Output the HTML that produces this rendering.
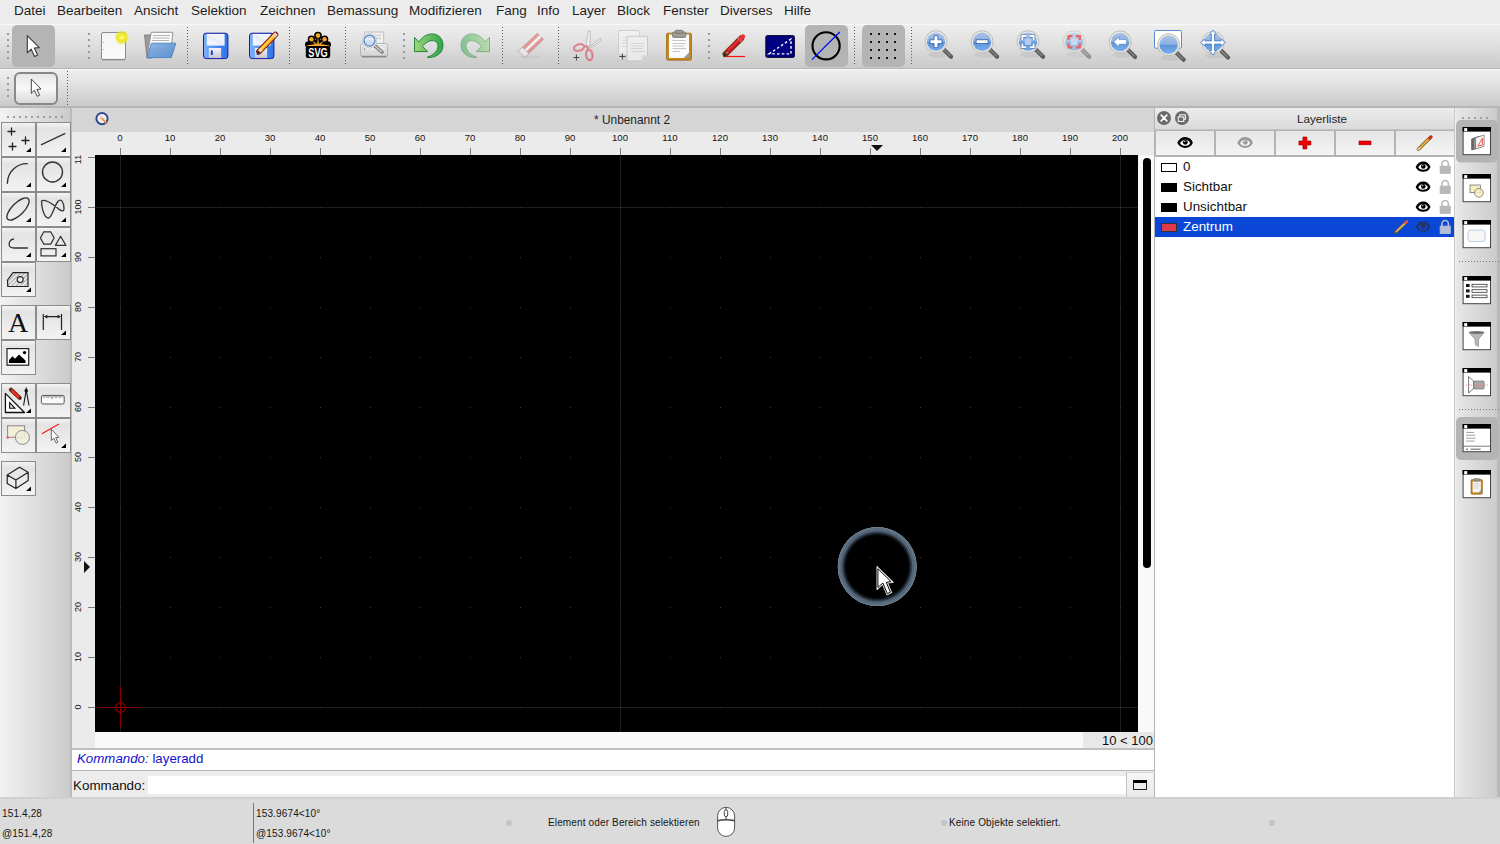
<!DOCTYPE html>
<html><head><meta charset="utf-8">
<style>
*{margin:0;padding:0;box-sizing:border-box}
html,body{width:1500px;height:844px;overflow:hidden;background:#dcdcdc;font-family:"Liberation Sans",sans-serif;position:relative}
.a{position:absolute}
svg{overflow:visible}
#menubar{left:0;top:0;width:1500px;height:24px;background:#ececec}
#menubar span{position:absolute;top:3px;font-size:13.5px;color:#1e1e1e;line-height:16px}
.tb{left:0;width:1500px;background:linear-gradient(#eeeeee,#e3e3e3 35%,#cacaca);border-top:1px solid #f8f8f8;border-bottom:1px solid #b6b6b6}
#tb1{top:24px;height:45px}
#tb2{top:69px;height:39px;border-bottom-width:2px !important}
#ldock{left:0;top:108px;width:72px;height:690px;background:linear-gradient(90deg,#f2f2f2,#dedede 50%,#cbcbcb 97%,#bababa 97%,#bababa)}
.tbtn{position:absolute;width:35px;height:35px;border:1px solid #8c8c8c;background:linear-gradient(#f3f3f3 0,#e3e3e3 18%,#f3f3f3 100%)}
.tbtn svg{position:absolute;left:0;top:0}
#mdi{left:72px;top:108px;width:1082px;height:690px;background:#ececec}
#mtitle{left:72px;top:108px;width:1082px;height:24px;background:#d5d5d5}
#mtitleT{left:594px;top:113px;font-size:11.9px;color:#1e1e1e;line-height:14px;white-space:nowrap}
#rulerT{left:72px;top:132px;width:1082px;height:23px;background:#ebebeb}
#rulerL{left:72px;top:155px;width:24px;height:593px;background:#ebebeb}
#rightstrip{left:1138px;top:155px;width:16px;height:593px;background:#f9f9f9}
#botstrip{left:95px;top:732px;width:1043px;height:16px;background:#f9f9f9}
#canvas{left:95px;top:155px;width:1043px;height:577px;background:#000;overflow:hidden}
#zoomlbl{left:1083px;top:732px;width:71px;height:16px;background:#e8e8e8;font-size:13px;color:#111;text-align:right;line-height:17px;padding-right:1px}
#hist{left:72px;top:748px;width:1082px;height:23px;background:#fff;border-top:2px solid #bfbfbf;border-bottom:1px solid #b4b4b4;font-size:13.3px;color:#1212cc;line-height:18px;padding-left:5px}
#cmdrow{left:72px;top:771px;width:1082px;height:27px;background:#ececec}
#cmdlbl{left:73px;top:778px;font-size:13.4px;color:#111;line-height:16px}
#cmdin{left:148px;top:776px;width:978px;height:18px;background:#fff}
#cmdbtn{left:1126px;top:772px;width:27px;height:26px;background:linear-gradient(#f6f6f6,#e8e8e8);border-left:1px solid #c4c4c4;border-top:1px solid #d4d4d4}
#status{left:0;top:797px;width:1500px;height:47px;background:#dbdbdb;border-top:2px solid #d0d0d0}
.st{position:absolute;font-size:10px;color:#161616;line-height:12px;white-space:nowrap;letter-spacing:.14px}
#rpanel{left:1154px;top:108px;width:301px;height:690px;background:#fff;border-left:1px solid #b4b4b4;border-right:1px solid #c8c8c8}
#rtitle{left:1155px;top:108px;width:299px;height:22px;background:linear-gradient(#ededed,#dadada);border-bottom:1px solid #c4c4c4}
#rtitleT{left:1297px;top:112px;font-size:11.7px;color:#1e1e1e;line-height:14px;white-space:nowrap}
#rbtns{left:1155px;top:130px;width:299px;height:27px;background:#b4b4b4}
.lbtn{position:absolute;top:1px;height:24px;background:linear-gradient(#e6e6e6,#f4f4f4)}
#rdock{left:1455px;top:108px;width:45px;height:689px;background:linear-gradient(90deg,#f0f0f0 0,#e6e6e6 5%,#cbcbcb 94%,#bababa 94%,#bababa)}
.row{position:absolute;left:1155px;width:299px;height:20px;font-size:13.4px;color:#111;line-height:20px}
.row .sw{position:absolute;left:6px;top:6px;width:16px;height:9px;background:#000}
.row .nm{position:absolute;left:28px;top:0}
.dsel{position:absolute;background:#b4b4b4;border-radius:6px}
</style></head><body>
<div id="menubar" class="a">
<span style="left:14px">Datei</span>
<span style="left:57px">Bearbeiten</span>
<span style="left:134px">Ansicht</span>
<span style="left:191px">Selektion</span>
<span style="left:260px">Zeichnen</span>
<span style="left:327px">Bemassung</span>
<span style="left:409px">Modifizieren</span>
<span style="left:496px">Fang</span>
<span style="left:537px">Info</span>
<span style="left:572px">Layer</span>
<span style="left:617px">Block</span>
<span style="left:663px">Fenster</span>
<span style="left:720px">Diverses</span>
<span style="left:784px">Hilfe</span>
</div>
<div id="tb1" class="a tb"></div>
<div id="tb2" class="a tb"></div>
<svg class="a" style="left:0;top:0" width="1500" height="107">
<defs>
 <linearGradient id="gDoc" x1="0" y1="0" x2="0" y2="1"><stop offset="0" stop-color="#f4f4f4"/><stop offset="1" stop-color="#fbfbfb"/></linearGradient>
 <radialGradient id="gGlow"><stop offset="0" stop-color="#ffffff"/><stop offset=".22" stop-color="#f8f040"/><stop offset=".6" stop-color="#eee42a"/><stop offset=".8" stop-color="#eee42a" stop-opacity=".6"/><stop offset="1" stop-color="#eee42a" stop-opacity="0"/></radialGradient>
 <linearGradient id="gFold" x1="0" y1="0" x2="1" y2="1"><stop offset="0" stop-color="#8fb6e2"/><stop offset="1" stop-color="#5b8fd0"/></linearGradient>
 <linearGradient id="gFlop" x1="0" y1="0" x2="1" y2="0"><stop offset="0" stop-color="#7fb2fb"/><stop offset=".5" stop-color="#4b8df2"/><stop offset="1" stop-color="#2f74e8"/></linearGradient>
 <linearGradient id="gShut" x1="0" y1="0" x2="0" y2="1"><stop offset="0" stop-color="#f2f2f6"/><stop offset="1" stop-color="#c6c6d4"/></linearGradient>
 <linearGradient id="gUndo" x1="0" y1="0" x2="1" y2="0"><stop offset="0" stop-color="#9ad878"/><stop offset="1" stop-color="#2fa64a"/></linearGradient>
 <linearGradient id="gLens" x1="0" y1="0" x2="0" y2="1"><stop offset="0" stop-color="#a9c3e6"/><stop offset=".48" stop-color="#8db0e0"/><stop offset=".52" stop-color="#5f93d8"/><stop offset="1" stop-color="#78aef0"/></linearGradient>
 <linearGradient id="gPrn" x1="0" y1="0" x2="0" y2="1"><stop offset="0" stop-color="#f4f4f4"/><stop offset="1" stop-color="#cfcfcf"/></linearGradient>
 <g id="lensHandle"><path d="M8,8 L15,15" stroke="#5c5c5c" stroke-width="4.2" stroke-linecap="round"/><path d="M8.5,8.5 L14,14" stroke="#8a8a8a" stroke-width="1.2" stroke-linecap="round"/></g>
 <g id="lens"><ellipse cx="3" cy="13" rx="11" ry="3" fill="#000" opacity=".06"/><use href="#lensHandle"/><circle r="11" fill="#e9e9e2" stroke="#bdbdb4" stroke-width="1"/><circle r="9.2" fill="url(#gLens)"/></g>
</defs>
<!-- handles / separators tb1 -->
<g fill="#9a9a9a">
 <rect x="7" y="33" width="2" height="2"/><rect x="7" y="39" width="2" height="2"/><rect x="7" y="45" width="2" height="2"/><rect x="7" y="51" width="2" height="2"/><rect x="7" y="57" width="2" height="2"/>
 <rect x="88" y="33" width="2" height="2"/><rect x="88" y="39" width="2" height="2"/><rect x="88" y="45" width="2" height="2"/><rect x="88" y="51" width="2" height="2"/><rect x="88" y="57" width="2" height="2"/>
 <rect x="403" y="33" width="2" height="2"/><rect x="403" y="39" width="2" height="2"/><rect x="403" y="45" width="2" height="2"/><rect x="403" y="51" width="2" height="2"/><rect x="403" y="57" width="2" height="2"/>
 <rect x="708" y="33" width="2" height="2"/><rect x="708" y="39" width="2" height="2"/><rect x="708" y="45" width="2" height="2"/><rect x="708" y="51" width="2" height="2"/><rect x="708" y="57" width="2" height="2"/>
 <rect x="7" y="77" width="2" height="2"/><rect x="7" y="83" width="2" height="2"/><rect x="7" y="89" width="2" height="2"/><rect x="7" y="95" width="2" height="2"/>
</g>
<g fill="#5a5a5a">
<rect x="187" y="27" width="1" height="1"/>
<rect x="187" y="30" width="1" height="1"/>
<rect x="187" y="33" width="1" height="1"/>
<rect x="187" y="36" width="1" height="1"/>
<rect x="187" y="39" width="1" height="1"/>
<rect x="187" y="42" width="1" height="1"/>
<rect x="187" y="45" width="1" height="1"/>
<rect x="187" y="48" width="1" height="1"/>
<rect x="187" y="51" width="1" height="1"/>
<rect x="187" y="54" width="1" height="1"/>
<rect x="187" y="57" width="1" height="1"/>
<rect x="187" y="60" width="1" height="1"/>
<rect x="187" y="63" width="1" height="1"/>
<rect x="289" y="27" width="1" height="1"/>
<rect x="289" y="30" width="1" height="1"/>
<rect x="289" y="33" width="1" height="1"/>
<rect x="289" y="36" width="1" height="1"/>
<rect x="289" y="39" width="1" height="1"/>
<rect x="289" y="42" width="1" height="1"/>
<rect x="289" y="45" width="1" height="1"/>
<rect x="289" y="48" width="1" height="1"/>
<rect x="289" y="51" width="1" height="1"/>
<rect x="289" y="54" width="1" height="1"/>
<rect x="289" y="57" width="1" height="1"/>
<rect x="289" y="60" width="1" height="1"/>
<rect x="289" y="63" width="1" height="1"/>
<rect x="345" y="27" width="1" height="1"/>
<rect x="345" y="30" width="1" height="1"/>
<rect x="345" y="33" width="1" height="1"/>
<rect x="345" y="36" width="1" height="1"/>
<rect x="345" y="39" width="1" height="1"/>
<rect x="345" y="42" width="1" height="1"/>
<rect x="345" y="45" width="1" height="1"/>
<rect x="345" y="48" width="1" height="1"/>
<rect x="345" y="51" width="1" height="1"/>
<rect x="345" y="54" width="1" height="1"/>
<rect x="345" y="57" width="1" height="1"/>
<rect x="345" y="60" width="1" height="1"/>
<rect x="345" y="63" width="1" height="1"/>
<rect x="502" y="27" width="1" height="1"/>
<rect x="502" y="30" width="1" height="1"/>
<rect x="502" y="33" width="1" height="1"/>
<rect x="502" y="36" width="1" height="1"/>
<rect x="502" y="39" width="1" height="1"/>
<rect x="502" y="42" width="1" height="1"/>
<rect x="502" y="45" width="1" height="1"/>
<rect x="502" y="48" width="1" height="1"/>
<rect x="502" y="51" width="1" height="1"/>
<rect x="502" y="54" width="1" height="1"/>
<rect x="502" y="57" width="1" height="1"/>
<rect x="502" y="60" width="1" height="1"/>
<rect x="502" y="63" width="1" height="1"/>
<rect x="558" y="27" width="1" height="1"/>
<rect x="558" y="30" width="1" height="1"/>
<rect x="558" y="33" width="1" height="1"/>
<rect x="558" y="36" width="1" height="1"/>
<rect x="558" y="39" width="1" height="1"/>
<rect x="558" y="42" width="1" height="1"/>
<rect x="558" y="45" width="1" height="1"/>
<rect x="558" y="48" width="1" height="1"/>
<rect x="558" y="51" width="1" height="1"/>
<rect x="558" y="54" width="1" height="1"/>
<rect x="558" y="57" width="1" height="1"/>
<rect x="558" y="60" width="1" height="1"/>
<rect x="558" y="63" width="1" height="1"/>
<rect x="854" y="27" width="1" height="1"/>
<rect x="854" y="30" width="1" height="1"/>
<rect x="854" y="33" width="1" height="1"/>
<rect x="854" y="36" width="1" height="1"/>
<rect x="854" y="39" width="1" height="1"/>
<rect x="854" y="42" width="1" height="1"/>
<rect x="854" y="45" width="1" height="1"/>
<rect x="854" y="48" width="1" height="1"/>
<rect x="854" y="51" width="1" height="1"/>
<rect x="854" y="54" width="1" height="1"/>
<rect x="854" y="57" width="1" height="1"/>
<rect x="854" y="60" width="1" height="1"/>
<rect x="854" y="63" width="1" height="1"/>
<rect x="911" y="27" width="1" height="1"/>
<rect x="911" y="30" width="1" height="1"/>
<rect x="911" y="33" width="1" height="1"/>
<rect x="911" y="36" width="1" height="1"/>
<rect x="911" y="39" width="1" height="1"/>
<rect x="911" y="42" width="1" height="1"/>
<rect x="911" y="45" width="1" height="1"/>
<rect x="911" y="48" width="1" height="1"/>
<rect x="911" y="51" width="1" height="1"/>
<rect x="911" y="54" width="1" height="1"/>
<rect x="911" y="57" width="1" height="1"/>
<rect x="911" y="60" width="1" height="1"/>
<rect x="911" y="63" width="1" height="1"/>
<rect x="67" y="71" width="1" height="1"/>
<rect x="67" y="74" width="1" height="1"/>
<rect x="67" y="77" width="1" height="1"/>
<rect x="67" y="80" width="1" height="1"/>
<rect x="67" y="83" width="1" height="1"/>
<rect x="67" y="86" width="1" height="1"/>
<rect x="67" y="89" width="1" height="1"/>
<rect x="67" y="92" width="1" height="1"/>
<rect x="67" y="95" width="1" height="1"/>
<rect x="67" y="98" width="1" height="1"/>
<rect x="67" y="101" width="1" height="1"/>
<rect x="67" y="104" width="1" height="1"/>
</g>
<!-- selected backgrounds -->
<rect x="12" y="25" width="43" height="42" rx="5" fill="#b4b4b4"/>
<rect x="805" y="25" width="43" height="42" rx="5" fill="#b4b4b4"/>
<rect x="862" y="25" width="43" height="42" rx="5" fill="#b4b4b4"/>
<!-- select arrow -->
<path d="M27.3,35.6 L27.3,52.8 L31.2,49.2 L34.6,56.4 L37.6,55 L34.3,48 L39.3,47.6 Z" fill="#fff" stroke="#3a3a3a" stroke-width="1.1" stroke-linejoin="round"/>
<!-- tb2 select button -->
<defs><linearGradient id="gB2" x1="0" y1="0" x2="0" y2="1"><stop offset="0" stop-color="#e6e6e6"/><stop offset=".5" stop-color="#f8f8f8"/><stop offset="1" stop-color="#d6d6d6"/></linearGradient></defs><rect x="15" y="73" width="42" height="31" rx="5" fill="url(#gB2)" stroke="#888" stroke-width="2"/>
<path d="M31.3,79 L31.3,93.4 L34.4,90.4 L37.2,96.3 L39.6,95.2 L36.9,89.4 L41,89 Z" fill="#fff" stroke="#444" stroke-width="1" stroke-linejoin="round"/>
<!-- new -->
<rect x="101.5" y="32.5" width="24" height="27" rx="1.5" fill="url(#gDoc)" stroke="#8c8c8c" stroke-width="1"/>
<line x1="102" y1="59.6" x2="125" y2="59.6" stroke="#888" stroke-width="1.4"/>
<circle cx="103.5" cy="42.5" r=".5" fill="#999"/><circle cx="103.5" cy="49.5" r=".5" fill="#999"/>
<circle cx="121.8" cy="37.5" r="7.4" fill="url(#gGlow)"/>
<!-- open -->
<path d="M144.5,35 L152,35 L152,58 L147,58 Z" fill="#9a9a9a" stroke="#777" stroke-width=".8"/>
<path d="M151.3,32.3 L172.8,32.3 L171,50 L147.5,54 Z" fill="#fbfbfb" stroke="#8a8a8a" stroke-width=".9"/>
<path d="M153,35.5 L170,35.5 M152.5,38 L169.5,38 M152,40.5 L169,40.5" stroke="#b4b4b4" stroke-width="1.2"/>
<path d="M151.5,43.2 L175.8,43.2 L171.3,57.6 L146.8,57.6 Z" fill="url(#gFold)" stroke="#4d7fc4" stroke-width=".9" stroke-linejoin="round"/>
<!-- save -->
<g id="floppy">
<rect x="203.5" y="33.2" width="24.4" height="25.4" rx="2.6" fill="url(#gFlop)" stroke="#1b1fa0" stroke-width="1"/>
<rect x="206.8" y="34" width="17.8" height="11.6" fill="#f2f4fc"/>
<path d="M208,36 L223,44" stroke="#e0e6f8" stroke-width="3" opacity=".6"/>
<rect x="208.8" y="48" width="12.3" height="10" fill="url(#gShut)"/>
<rect x="210.8" y="50.4" width="2" height="4.6" fill="#1b3fd8"/>
</g>
<use href="#floppy" x="46"/>
<path d="M259,51.5 L275.5,34.5" stroke="#8a1a10" stroke-width="5.6" stroke-linecap="round"/>
<path d="M259.8,50.7 L275.5,34.5" stroke="#f8b010" stroke-width="3.8" stroke-linecap="butt"/>
<path d="M261,49 L274.5,35.2" stroke="#ffe070" stroke-width="1.2"/>
<path d="M273.5,36.5 L276.5,33.5" stroke="#e8d0c0" stroke-width="3.8"/>
<path d="M258.8,51.7 L261.5,49" stroke="#f0e0c0" stroke-width="3"/>
<circle cx="258.6" cy="51.9" r="1" fill="#222"/>
<!-- svg logo -->
<g fill="#000">
 <circle cx="318" cy="35.6" r="3.9"/><circle cx="311.4" cy="39.2" r="3.7"/><circle cx="324.6" cy="39.2" r="3.7"/><circle cx="308.4" cy="44.6" r="3.4"/><circle cx="327.6" cy="44.6" r="3.4"/>
 <path d="M306,46 L318,38 L330,46 Z"/>
</g>
<g fill="#f9a825">
 <circle cx="318" cy="35.6" r="2.3"/><circle cx="311.4" cy="39.2" r="2.2"/><circle cx="324.6" cy="39.2" r="2.2"/>
 <path d="M318,37 L317,44.5 L319,44.5 Z M311.8,40.5 L315.6,45 L317,44 Z M324.2,40.5 L320.4,45 L319,44 Z"/>
 <path d="M306.6,45.6 Q318,42.6 329.4,45.6 L329.4,46.4 L306.6,46.4 Z"/>
</g>
<rect x="305.8" y="46" width="24.4" height="12" rx="2.6" fill="#000"/>
<text x="318" y="56.8" font-family="Liberation Sans" font-weight="bold" font-size="12" fill="#fff" text-anchor="middle" textLength="19.4" lengthAdjust="spacingAndGlyphs">SVG</text>
<!-- print preview -->
<rect x="364.5" y="32" width="19.2" height="13" rx="1.2" fill="#f0f0f0" stroke="#bdbdbd" stroke-width="1"/>
<path d="M375,35.5 L381,35.5 M375,38.5 L381,38.5" stroke="#cfcfcf" stroke-width="1.4"/>
<rect x="360.5" y="43.5" width="27.2" height="13.2" rx="2.8" fill="url(#gPrn)" stroke="#b0b0b0" stroke-width="1"/>
<rect x="362.5" y="45.5" width="23" height="5.6" rx="1.5" fill="#e6e6e6" stroke="#cfcfcf" stroke-width=".6"/>
<line x1="362" y1="56.6" x2="386.5" y2="56.6" stroke="#8a8a8a" stroke-width="1.6"/>
<circle cx="364.6" cy="49.2" r=".6" fill="#555"/>
<path d="M374.6,45.6 L382,52" stroke="#7a7a7a" stroke-width="3.6" stroke-linecap="round"/>
<path d="M375,46 L381.6,51.6" stroke="#c8c8c8" stroke-width="1.6" stroke-linecap="round"/>
<circle cx="369.5" cy="40.7" r="7.2" fill="#f6f6f6" stroke="#c4c4c4" stroke-width=".8"/>
<circle cx="369.5" cy="40.7" r="5.5" fill="#cddbee" stroke="#4f84cf" stroke-width="1.3"/>
<path d="M365,40 Q369.5,37.8 374,40" stroke="#e8eef8" stroke-width="2" fill="none"/>
<!-- undo -->
<path id="undo" d="M414.5,37.4 L414.5,51.6 L427.8,51.6 L422.4,46.3 C425,43 429,40.6 432.2,40.6 C436,40.6 438,43 438,46 C438,51 433,55.5 427.2,57.3 C434,58.5 443,54 443,45.5 C443,38 438,33.9 432.2,33.9 C426,33.9 421.5,38 418.9,42.1 Z" fill="url(#gUndo)" stroke="#1a7a34" stroke-width=".9" stroke-linejoin="round"/>
<g opacity=".5"><use href="#undo" transform="translate(904,0) scale(-1,1)"/></g>
<!-- eraser -->
<g opacity=".6">
<ellipse cx="530" cy="57" rx="11" ry="1.6" fill="#bdbdbd" opacity=".7"/>
<path d="M518.2,51.3 L537.2,33.3 L543.6,39.3 L525.2,57 Z" fill="#e26a6a" stroke="#a05050" stroke-width=".6"/>
<path d="M521.5,54.4 L540.4,36.3" stroke="#ffffff" stroke-width="2.6"/>
<path d="M518.2,51.3 L522.3,47.4 L528.8,53.5 L525.2,57 Z" fill="#f2f2f2" stroke="#a0a0a0" stroke-width=".6"/>
</g>
<!-- cut -->
<g opacity=".62">
<path d="M586,46 L588.2,31 L590.3,31 L589.8,46.3 Z" fill="#fafafa" stroke="#888" stroke-width=".7"/>
<path d="M589.5,46.8 L600.5,38.2 L601,40.3 L590.5,48 Z" fill="#fafafa" stroke="#888" stroke-width=".7"/>
<ellipse cx="579" cy="47.5" rx="5.2" ry="3.2" transform="rotate(-18 579 47.5)" fill="none" stroke="#e0505a" stroke-width="2.2"/>
<ellipse cx="589.3" cy="55" rx="3.2" ry="5.2" transform="rotate(-8 589.3 55)" fill="none" stroke="#e0505a" stroke-width="2.2"/>
<path d="M583.5,46.5 L587,46.5 L588.5,50" stroke="#e0505a" stroke-width="2" fill="none"/>
</g>
<path d="M573.4,57.5 L579.4,57.5 M576.4,54.5 L576.4,60.5" stroke="#444" stroke-width="1"/>
<!-- copy -->
<g opacity=".7">
<rect x="618.5" y="30.5" width="21" height="24.5" rx="1.5" fill="#f4f4f4" stroke="#c6c6c6"/>
<path d="M622,37.5 L630,37.5 M622,40.5 L630,40.5 M622,43.5 L630,43.5 M622,46.5 L630,46.5" stroke="#d8d8d8" stroke-width="1.1"/>
<path d="M627,36.3 L647.5,36.3 L647.5,55.3 L641.5,61 L627,61 Z" fill="#f3f3f3" stroke="#bcbcbc"/>
<path d="M641.5,61 L641.5,55.3 L647.5,55.3 Z" fill="#dadada"/>
<path d="M631,43.5 L644.5,43.5 M631,46 L644,46 M631,48.5 L643,48.5 M631,51.5 L644.5,51.5" stroke="#d0d0d0" stroke-width="1.1"/>
</g>
<path d="M619.4,56.5 L625.4,56.5 M622.4,53.5 L622.4,59.5" stroke="#444" stroke-width="1"/>
<!-- paste -->
<rect x="666.5" y="33.2" width="25" height="27" rx="1.5" fill="#c8861e" stroke="#9a6a1a" stroke-width=".8"/>
<path d="M669,34.5 L689,34.5 L689,58 L669,58 Z" fill="#fbfbfb"/>
<path d="M683.5,58 L689,52.5 L689,58 Z" fill="#9b9b9b"/>
<path d="M672.5,40.5 L686,40.5 M672.5,43.5 L685.5,43.5 M672.5,46 L684.5,46 M672.5,48.5 L686,48.5 M672.5,51.5 L680,51.5" stroke="#c6c6c6" stroke-width="1"/>
<rect x="672.4" y="32" width="13.4" height="5.4" rx="1.5" fill="#9e9e94" stroke="#6e6e66" stroke-width=".8"/>
<rect x="675.3" y="30.3" width="7.6" height="3" rx=".8" fill="#9e9e94" stroke="#6e6e66" stroke-width=".8"/>
<!-- pencil (draw) -->
<line x1="723" y1="56.5" x2="745" y2="56.5" stroke="#ff1010" stroke-width="1.2"/>
<path d="M725.5,54 L741.2,38.3" stroke="#6a3a10" stroke-width="6" stroke-linecap="round"/>
<path d="M726.5,53 L741.2,38.3" stroke="#d0142a" stroke-width="4.4"/>
<path d="M728.5,50 L739,39.5" stroke="#ff6040" stroke-width="1"/>
<path d="M739.2,40.3 L741.2,38.3" stroke="#d8d8d8" stroke-width="4.4"/>
<path d="M740.6,38.9 L743,36.5" stroke="#f03040" stroke-width="4.4" stroke-linecap="round"/>
<path d="M724.5,55.1 L727.8,51.2 L728.9,52.3 Z" fill="#f0d8b0" stroke="#6a3a10" stroke-width=".7"/>
<circle cx="724.9" cy="54.7" r=".9" fill="#111"/>
<!-- blue rect -->
<rect x="765.8" y="35.6" width="28.6" height="21.8" rx="1.5" fill="#000082" stroke="#0a0a30" stroke-width="1"/>
<path d="M769.1,53.9 L791,39 L791,53.9 Z" fill="none" stroke="#fff" stroke-width="1.4" stroke-dasharray="2.6 2.2"/>
<!-- circle icon -->
<circle cx="826.1" cy="45.8" r="13.6" fill="none" stroke="#000" stroke-width="2.1"/>
<line x1="812" y1="59.6" x2="839.8" y2="32" stroke="#0010ff" stroke-width="1.3"/>
<!-- grid dots -->
<g fill="#111">
 <rect x="870" y="33" width="2" height="2"/><rect x="878" y="33" width="2" height="2"/><rect x="886" y="33" width="2" height="2"/><rect x="894" y="33" width="2" height="2"/>
 <rect x="870" y="41" width="2" height="2"/><rect x="878" y="41" width="2" height="2"/><rect x="886" y="41" width="2" height="2"/><rect x="894" y="41" width="2" height="2"/>
 <rect x="870" y="49" width="2" height="2"/><rect x="878" y="49" width="2" height="2"/><rect x="886" y="49" width="2" height="2"/><rect x="894" y="49" width="2" height="2"/>
 <rect x="870" y="57" width="2" height="2"/><rect x="878" y="57" width="2" height="2"/><rect x="886" y="57" width="2" height="2"/><rect x="894" y="57" width="2" height="2"/>
</g>
<!-- zoom in -->
<g transform="translate(936 41.7)"><use href="#lens"/>
 <path d="M-1.9,-6 h3.8 v4.1 h4.1 v3.8 h-4.1 v4.1 h-3.8 v-4.1 h-4.1 v-3.8 h4.1 Z" fill="#fff" stroke="#2a5aa8" stroke-width=".8"/></g>
<!-- zoom out -->
<g transform="translate(982.1 41.7)"><use href="#lens"/>
 <rect x="-6" y="-1.9" width="12" height="3.8" fill="#fff" stroke="#2a5aa8" stroke-width=".8"/></g>
<!-- zoom auto -->
<g transform="translate(1028 41.7)"><use href="#lens"/>
 <rect x="-3.2" y="-3.2" width="6.4" height="6.4" fill="#b4cdee"/>
 <path d="M-5.6,-1.8 v-3.8 h3.8 M1.8,-5.6 h3.8 v3.8 M5.6,1.8 v3.8 h-3.8 M-1.8,5.6 h-3.8 v-3.8" fill="none" stroke="#3a68b0" stroke-width="3.2"/>
 <path d="M-5.6,-1.8 v-3.8 h3.8 M1.8,-5.6 h3.8 v3.8 M5.6,1.8 v3.8 h-3.8 M-1.8,5.6 h-3.8 v-3.8" fill="none" stroke="#fff" stroke-width="2"/></g>
<!-- zoom selection (disabled) -->
<g transform="translate(1074.2 41.7)" opacity=".55"><use href="#lens"/></g>
<g transform="translate(1074.2 41.7)">
 <rect x="-3.2" y="-3.2" width="6.4" height="6.4" fill="#c8d8f0"/>
 <path d="M-5.6,-1.8 v-3.8 h3.8 M1.8,-5.6 h3.8 v3.8 M5.6,1.8 v3.8 h-3.8 M-1.8,5.6 h-3.8 v-3.8" fill="none" stroke="#ea6464" stroke-width="2.2"/></g>
<!-- zoom previous -->
<g transform="translate(1120.1 41.9)"><use href="#lens"/>
 <path d="M-6.5,0 L-1,-5 L-1,-2.3 L6.5,-2.3 L6.5,2.3 L-1,2.3 L-1,5 Z" fill="#fff" stroke="#4a78c0" stroke-width=".6"/></g>
<!-- zoom window -->
<rect x="1154.5" y="30.5" width="27" height="17.6" rx="1" fill="#fff" stroke="#5b8ad0" stroke-width="1"/>
<g transform="translate(1168.6 44.7)"><use href="#lens"/></g>
<!-- pan -->
<g transform="translate(1213 42.5)"><use href="#lens"/>
 <path d="M0,-12.5 L3.5,-8 L1.6,-8 L1.6,-1.6 L8,-1.6 L8,-3.5 L12.5,0 L8,3.5 L8,1.6 L1.6,1.6 L1.6,8 L3.5,8 L0,12.5 L-3.5,8 L-1.6,8 L-1.6,1.6 L-8,1.6 L-8,3.5 L-12.5,0 L-8,-3.5 L-8,-1.6 L-1.6,-1.6 L-1.6,-8 L-3.5,-8 Z" fill="#fff" stroke="#4a7ec8" stroke-width=".9" stroke-linejoin="round"/></g>
</svg>

<div id="ldock" class="a"></div>
<div class="tbtn" style="left:1px;top:122px"></div>
<div class="tbtn" style="left:36px;top:122px"></div>
<div class="tbtn" style="left:1px;top:157px"></div>
<div class="tbtn" style="left:36px;top:157px"></div>
<div class="tbtn" style="left:1px;top:192px"></div>
<div class="tbtn" style="left:36px;top:192px"></div>
<div class="tbtn" style="left:1px;top:227px"></div>
<div class="tbtn" style="left:36px;top:227px"></div>
<div class="tbtn" style="left:1px;top:262px"></div>
<div class="tbtn" style="left:1px;top:305px"></div>
<div class="tbtn" style="left:36px;top:305px"></div>
<div class="tbtn" style="left:1px;top:340px"></div>
<div class="tbtn" style="left:1px;top:383px"></div>
<div class="tbtn" style="left:36px;top:383px"></div>
<div class="tbtn" style="left:1px;top:418px"></div>
<div class="tbtn" style="left:36px;top:418px"></div>
<div class="tbtn" style="left:1px;top:461px"></div>
<svg class="a" style="left:0;top:0" width="72" height="500">
<g fill="#9c9c9c">
 <rect x="7" y="116" width="2" height="2"/><rect x="13" y="116" width="2" height="2"/><rect x="19" y="116" width="2" height="2"/><rect x="25" y="116" width="2" height="2"/><rect x="31" y="116" width="2" height="2"/><rect x="37" y="116" width="2" height="2"/><rect x="43" y="116" width="2" height="2"/><rect x="49" y="116" width="2" height="2"/><rect x="55" y="116" width="2" height="2"/><rect x="61" y="116" width="2" height="2"/>
</g>
<!-- small triangles -->
<g fill="#000">
 <path d="M26,152 L31,147.5 L31,152 Z"/><path d="M61,152 L66,147.5 L66,152 Z"/>
 <path d="M26,187 L31,182.5 L31,187 Z"/><path d="M61,187 L66,182.5 L66,187 Z"/>
 <path d="M26,222 L31,217.5 L31,222 Z"/><path d="M61,222 L66,217.5 L66,222 Z"/>
 <path d="M26,257 L31,252.5 L31,257 Z"/><path d="M61,257 L66,252.5 L66,257 Z"/>
 <path d="M26,292 L31,287.5 L31,292 Z"/>
 <path d="M61,335 L66,330.5 L66,335 Z"/>
 <path d="M26,413 L31,408.5 L31,413 Z"/>
 <path d="M61,448 L66,443.5 L66,448 Z"/>
 <path d="M26,491 L31,486.5 L31,491 Z"/>
</g>
<g stroke="#222" stroke-width="1.3" fill="none" stroke-linecap="round">
 <!-- points -->
 <path d="M8,131.5 h7 M11.5,128 v7 M22,140.5 h7 M25.5,137 v7 M9,146.5 h7 M12.5,143 v7"/>
 <!-- line -->
 <path d="M41.5,144.7 L64.8,133.6" stroke="#333"/>
 <!-- arc -->
 <path d="M7.4,183.2 A19.8,19.8 0 0 1 27.3,163.6" stroke="#333" stroke-width="1.4"/>
 <!-- circle -->
 <circle cx="52.5" cy="172" r="10" stroke="#333" stroke-width="1.4"/>
 <!-- ellipse -->
 <ellipse cx="18" cy="209" rx="14.5" ry="6" transform="rotate(-45 18 209)" stroke="#333" stroke-width="1.4"/>
 <!-- spline -->
 <path d="M41.5,201 C42,212 45.5,218.5 48.5,218 C52,217.5 54,206 58,201.5 C61.5,197.5 64,203 64,209 C64,212 60.5,211 57.5,208 C52.5,204 45,198.5 41.5,201 Z" stroke="#333" stroke-width="1.3"/>
 <!-- polyline -->
 <path d="M13.5,239 C9.5,239.5 8.5,243.5 9.5,246 C10.5,248 13,248 15,248 L27.5,248" stroke="#333" stroke-width="1.3"/>
 <!-- shapes -->
 <path d="M43.8,231.8 L50.7,231.8 L54.1,238 L50.7,244.1 L43.8,244.1 L40.4,238 Z" stroke="#333" stroke-width="1.2"/>
 <path d="M60.6,236.3 L65.9,245.4 L55.4,245.4 Z" stroke="#333" stroke-width="1.2" stroke-linejoin="round"/>
 <rect x="41" y="248.7" width="15" height="7.2" stroke="#333" stroke-width="1.2"/>
</g>
<!-- hatch -->
<defs><pattern id="hp" width="3" height="3" patternUnits="userSpaceOnUse" patternTransform="rotate(45)"><line x1="0" y1="0" x2="0" y2="3" stroke="#444" stroke-width=".8"/></pattern></defs>
<path d="M7.5,280 L13,272.6 L28,272.6 L28,286.5 L7.8,286.5 Z" fill="url(#hp)" stroke="#222" stroke-width="1.2"/>
<circle cx="20.2" cy="279.6" r="3" fill="#f0f0f0" stroke="#222" stroke-width="1.1"/>
<!-- text A -->
<text x="18" y="331.6" font-family="Liberation Serif" font-size="28" fill="#111" text-anchor="middle">A</text>
<!-- dimension -->
<g stroke="#222" stroke-width="1.2" fill="none">
 <path d="M43.3,314 L43.3,330 M61.5,314 L61.5,330 M45,316.6 L60,316.6"/>
</g>
<path d="M43.8,316.6 L47.3,314.8 L47.3,318.4 Z M61,316.6 L57.5,314.8 L57.5,318.4 Z" fill="#222"/>
<!-- image -->
<rect x="7" y="348.6" width="21.7" height="16.6" fill="#fff" stroke="#222" stroke-width="1.2"/>
<path d="M9,363 L9,360 L12.5,356.3 L15,358.8 L19,354.5 L25.5,360.5 L25.5,363 Z" fill="#000"/>
<circle cx="24.5" cy="352.6" r="1.7" fill="#000"/>
<!-- snap / set square -->
<path d="M5.4,393.4 L5.4,412.5 L24.5,412.5 Z" fill="#fff" stroke="#111" stroke-width="1.3" stroke-linejoin="round"/>
<path d="M9.6,402.6 L9.6,408.3 L15,408.3 Z" fill="#ddd" stroke="#111" stroke-width="1.1"/>
<path d="M11,389.8 L19.6,397.8" stroke="#6a2a10" stroke-width="4.2" stroke-linecap="round"/>
<path d="M11.5,390.2 L19.5,397.6" stroke="#e0302a" stroke-width="2.8"/>
<path d="M19.2,397.3 L21,399" stroke="#222" stroke-width="1.2"/>
<g stroke="#111" stroke-width="1.1" fill="none">
 <path d="M26.2,387.5 L26.2,390 M26.2,390 L23.6,405.5 M26.2,390 L29,405.5"/>
 <circle cx="26.2" cy="390.8" r="1.2" fill="#111"/>
</g>
<!-- measure ruler -->
<rect x="41.4" y="395.4" width="22.8" height="8.6" rx="1.6" fill="#fafafa" stroke="#555" stroke-width="1"/>
<path d="M44,395.8 v2.4 M46,395.8 v1.6 M48,395.8 v2.4 M50,395.8 v1.6 M52,395.8 v3.2 M54,395.8 v1.6 M56,395.8 v2.4 M58,395.8 v1.6 M60,395.8 v2.4 M62,395.8 v1.6" stroke="#555" stroke-width=".8"/>
<!-- modify -->
<rect x="7.6" y="425.8" width="17" height="11.5" fill="#f2eed8" stroke="#8a8a8a" stroke-width="1"/>
<circle cx="22.4" cy="437.4" r="7" fill="#f2eed8" fill-opacity=".85" stroke="#8a8a8a" stroke-width="1"/>
<circle cx="7.6" cy="437.4" r="1.2" fill="#ee5050"/>
<!-- select -->
<line x1="41.9" y1="433.8" x2="59" y2="424" stroke="#ee2020" stroke-width="1.3"/>
<path d="M51.3,429.3 L51.3,440.5 L53.8,438.2 L56,443 L57.8,442.2 L55.7,437.6 L58.8,437.3 Z" fill="#fff" stroke="#555" stroke-width=".9" stroke-linejoin="round"/>
<!-- 3D box -->
<g stroke="#222" stroke-width="1.2" fill="none" stroke-linejoin="round">
 <path d="M7.2,474.9 L19.5,467.3 L28.2,472.3 L15.9,480 Z M7.2,474.9 L7.2,483.5 L15.9,488.6 L28.2,480.6 L28.2,472.3 M15.9,480 L15.9,488.6"/>
</g>
</svg>

<div id="mdi" class="a"></div>
<div id="mtitle" class="a"></div>
<div id="mtitleT" class="a">* Unbenannt 2</div>
<div id="rulerT" class="a"></div>
<div id="rulerL" class="a"></div>
<div id="rightstrip" class="a"></div>
<div id="botstrip" class="a"></div>
<div id="canvas" class="a"></div>
<svg class="a" style="left:95px;top:155px" width="1043" height="577">
<g stroke="#1e1e1e" stroke-width="1">
<line x1="25.5" y1="0" x2="25.5" y2="577"/>
<line x1="525.5" y1="0" x2="525.5" y2="577"/>
<line x1="1025.5" y1="0" x2="1025.5" y2="577"/>
<line x1="0" y1="552.5" x2="1043" y2="552.5"/>
<line x1="0" y1="52.5" x2="1043" y2="52.5"/>
</g>
<g fill="#3a3a3a">
<rect x="25" y="552" width="1" height="1"/>
<rect x="25" y="502" width="1" height="1"/>
<rect x="25" y="452" width="1" height="1"/>
<rect x="25" y="402" width="1" height="1"/>
<rect x="25" y="352" width="1" height="1"/>
<rect x="25" y="302" width="1" height="1"/>
<rect x="25" y="252" width="1" height="1"/>
<rect x="25" y="202" width="1" height="1"/>
<rect x="25" y="152" width="1" height="1"/>
<rect x="25" y="102" width="1" height="1"/>
<rect x="25" y="52" width="1" height="1"/>
<rect x="25" y="2" width="1" height="1"/>
<rect x="75" y="552" width="1" height="1"/>
<rect x="75" y="502" width="1" height="1"/>
<rect x="75" y="452" width="1" height="1"/>
<rect x="75" y="402" width="1" height="1"/>
<rect x="75" y="352" width="1" height="1"/>
<rect x="75" y="302" width="1" height="1"/>
<rect x="75" y="252" width="1" height="1"/>
<rect x="75" y="202" width="1" height="1"/>
<rect x="75" y="152" width="1" height="1"/>
<rect x="75" y="102" width="1" height="1"/>
<rect x="75" y="52" width="1" height="1"/>
<rect x="75" y="2" width="1" height="1"/>
<rect x="125" y="552" width="1" height="1"/>
<rect x="125" y="502" width="1" height="1"/>
<rect x="125" y="452" width="1" height="1"/>
<rect x="125" y="402" width="1" height="1"/>
<rect x="125" y="352" width="1" height="1"/>
<rect x="125" y="302" width="1" height="1"/>
<rect x="125" y="252" width="1" height="1"/>
<rect x="125" y="202" width="1" height="1"/>
<rect x="125" y="152" width="1" height="1"/>
<rect x="125" y="102" width="1" height="1"/>
<rect x="125" y="52" width="1" height="1"/>
<rect x="125" y="2" width="1" height="1"/>
<rect x="175" y="552" width="1" height="1"/>
<rect x="175" y="502" width="1" height="1"/>
<rect x="175" y="452" width="1" height="1"/>
<rect x="175" y="402" width="1" height="1"/>
<rect x="175" y="352" width="1" height="1"/>
<rect x="175" y="302" width="1" height="1"/>
<rect x="175" y="252" width="1" height="1"/>
<rect x="175" y="202" width="1" height="1"/>
<rect x="175" y="152" width="1" height="1"/>
<rect x="175" y="102" width="1" height="1"/>
<rect x="175" y="52" width="1" height="1"/>
<rect x="175" y="2" width="1" height="1"/>
<rect x="225" y="552" width="1" height="1"/>
<rect x="225" y="502" width="1" height="1"/>
<rect x="225" y="452" width="1" height="1"/>
<rect x="225" y="402" width="1" height="1"/>
<rect x="225" y="352" width="1" height="1"/>
<rect x="225" y="302" width="1" height="1"/>
<rect x="225" y="252" width="1" height="1"/>
<rect x="225" y="202" width="1" height="1"/>
<rect x="225" y="152" width="1" height="1"/>
<rect x="225" y="102" width="1" height="1"/>
<rect x="225" y="52" width="1" height="1"/>
<rect x="225" y="2" width="1" height="1"/>
<rect x="275" y="552" width="1" height="1"/>
<rect x="275" y="502" width="1" height="1"/>
<rect x="275" y="452" width="1" height="1"/>
<rect x="275" y="402" width="1" height="1"/>
<rect x="275" y="352" width="1" height="1"/>
<rect x="275" y="302" width="1" height="1"/>
<rect x="275" y="252" width="1" height="1"/>
<rect x="275" y="202" width="1" height="1"/>
<rect x="275" y="152" width="1" height="1"/>
<rect x="275" y="102" width="1" height="1"/>
<rect x="275" y="52" width="1" height="1"/>
<rect x="275" y="2" width="1" height="1"/>
<rect x="325" y="552" width="1" height="1"/>
<rect x="325" y="502" width="1" height="1"/>
<rect x="325" y="452" width="1" height="1"/>
<rect x="325" y="402" width="1" height="1"/>
<rect x="325" y="352" width="1" height="1"/>
<rect x="325" y="302" width="1" height="1"/>
<rect x="325" y="252" width="1" height="1"/>
<rect x="325" y="202" width="1" height="1"/>
<rect x="325" y="152" width="1" height="1"/>
<rect x="325" y="102" width="1" height="1"/>
<rect x="325" y="52" width="1" height="1"/>
<rect x="325" y="2" width="1" height="1"/>
<rect x="375" y="552" width="1" height="1"/>
<rect x="375" y="502" width="1" height="1"/>
<rect x="375" y="452" width="1" height="1"/>
<rect x="375" y="402" width="1" height="1"/>
<rect x="375" y="352" width="1" height="1"/>
<rect x="375" y="302" width="1" height="1"/>
<rect x="375" y="252" width="1" height="1"/>
<rect x="375" y="202" width="1" height="1"/>
<rect x="375" y="152" width="1" height="1"/>
<rect x="375" y="102" width="1" height="1"/>
<rect x="375" y="52" width="1" height="1"/>
<rect x="375" y="2" width="1" height="1"/>
<rect x="425" y="552" width="1" height="1"/>
<rect x="425" y="502" width="1" height="1"/>
<rect x="425" y="452" width="1" height="1"/>
<rect x="425" y="402" width="1" height="1"/>
<rect x="425" y="352" width="1" height="1"/>
<rect x="425" y="302" width="1" height="1"/>
<rect x="425" y="252" width="1" height="1"/>
<rect x="425" y="202" width="1" height="1"/>
<rect x="425" y="152" width="1" height="1"/>
<rect x="425" y="102" width="1" height="1"/>
<rect x="425" y="52" width="1" height="1"/>
<rect x="425" y="2" width="1" height="1"/>
<rect x="475" y="552" width="1" height="1"/>
<rect x="475" y="502" width="1" height="1"/>
<rect x="475" y="452" width="1" height="1"/>
<rect x="475" y="402" width="1" height="1"/>
<rect x="475" y="352" width="1" height="1"/>
<rect x="475" y="302" width="1" height="1"/>
<rect x="475" y="252" width="1" height="1"/>
<rect x="475" y="202" width="1" height="1"/>
<rect x="475" y="152" width="1" height="1"/>
<rect x="475" y="102" width="1" height="1"/>
<rect x="475" y="52" width="1" height="1"/>
<rect x="475" y="2" width="1" height="1"/>
<rect x="525" y="552" width="1" height="1"/>
<rect x="525" y="502" width="1" height="1"/>
<rect x="525" y="452" width="1" height="1"/>
<rect x="525" y="402" width="1" height="1"/>
<rect x="525" y="352" width="1" height="1"/>
<rect x="525" y="302" width="1" height="1"/>
<rect x="525" y="252" width="1" height="1"/>
<rect x="525" y="202" width="1" height="1"/>
<rect x="525" y="152" width="1" height="1"/>
<rect x="525" y="102" width="1" height="1"/>
<rect x="525" y="52" width="1" height="1"/>
<rect x="525" y="2" width="1" height="1"/>
<rect x="575" y="552" width="1" height="1"/>
<rect x="575" y="502" width="1" height="1"/>
<rect x="575" y="452" width="1" height="1"/>
<rect x="575" y="402" width="1" height="1"/>
<rect x="575" y="352" width="1" height="1"/>
<rect x="575" y="302" width="1" height="1"/>
<rect x="575" y="252" width="1" height="1"/>
<rect x="575" y="202" width="1" height="1"/>
<rect x="575" y="152" width="1" height="1"/>
<rect x="575" y="102" width="1" height="1"/>
<rect x="575" y="52" width="1" height="1"/>
<rect x="575" y="2" width="1" height="1"/>
<rect x="625" y="552" width="1" height="1"/>
<rect x="625" y="502" width="1" height="1"/>
<rect x="625" y="452" width="1" height="1"/>
<rect x="625" y="402" width="1" height="1"/>
<rect x="625" y="352" width="1" height="1"/>
<rect x="625" y="302" width="1" height="1"/>
<rect x="625" y="252" width="1" height="1"/>
<rect x="625" y="202" width="1" height="1"/>
<rect x="625" y="152" width="1" height="1"/>
<rect x="625" y="102" width="1" height="1"/>
<rect x="625" y="52" width="1" height="1"/>
<rect x="625" y="2" width="1" height="1"/>
<rect x="675" y="552" width="1" height="1"/>
<rect x="675" y="502" width="1" height="1"/>
<rect x="675" y="452" width="1" height="1"/>
<rect x="675" y="402" width="1" height="1"/>
<rect x="675" y="352" width="1" height="1"/>
<rect x="675" y="302" width="1" height="1"/>
<rect x="675" y="252" width="1" height="1"/>
<rect x="675" y="202" width="1" height="1"/>
<rect x="675" y="152" width="1" height="1"/>
<rect x="675" y="102" width="1" height="1"/>
<rect x="675" y="52" width="1" height="1"/>
<rect x="675" y="2" width="1" height="1"/>
<rect x="725" y="552" width="1" height="1"/>
<rect x="725" y="502" width="1" height="1"/>
<rect x="725" y="452" width="1" height="1"/>
<rect x="725" y="402" width="1" height="1"/>
<rect x="725" y="352" width="1" height="1"/>
<rect x="725" y="302" width="1" height="1"/>
<rect x="725" y="252" width="1" height="1"/>
<rect x="725" y="202" width="1" height="1"/>
<rect x="725" y="152" width="1" height="1"/>
<rect x="725" y="102" width="1" height="1"/>
<rect x="725" y="52" width="1" height="1"/>
<rect x="725" y="2" width="1" height="1"/>
<rect x="775" y="552" width="1" height="1"/>
<rect x="775" y="502" width="1" height="1"/>
<rect x="775" y="452" width="1" height="1"/>
<rect x="775" y="402" width="1" height="1"/>
<rect x="775" y="352" width="1" height="1"/>
<rect x="775" y="302" width="1" height="1"/>
<rect x="775" y="252" width="1" height="1"/>
<rect x="775" y="202" width="1" height="1"/>
<rect x="775" y="152" width="1" height="1"/>
<rect x="775" y="102" width="1" height="1"/>
<rect x="775" y="52" width="1" height="1"/>
<rect x="775" y="2" width="1" height="1"/>
<rect x="825" y="552" width="1" height="1"/>
<rect x="825" y="502" width="1" height="1"/>
<rect x="825" y="452" width="1" height="1"/>
<rect x="825" y="402" width="1" height="1"/>
<rect x="825" y="352" width="1" height="1"/>
<rect x="825" y="302" width="1" height="1"/>
<rect x="825" y="252" width="1" height="1"/>
<rect x="825" y="202" width="1" height="1"/>
<rect x="825" y="152" width="1" height="1"/>
<rect x="825" y="102" width="1" height="1"/>
<rect x="825" y="52" width="1" height="1"/>
<rect x="825" y="2" width="1" height="1"/>
<rect x="875" y="552" width="1" height="1"/>
<rect x="875" y="502" width="1" height="1"/>
<rect x="875" y="452" width="1" height="1"/>
<rect x="875" y="402" width="1" height="1"/>
<rect x="875" y="352" width="1" height="1"/>
<rect x="875" y="302" width="1" height="1"/>
<rect x="875" y="252" width="1" height="1"/>
<rect x="875" y="202" width="1" height="1"/>
<rect x="875" y="152" width="1" height="1"/>
<rect x="875" y="102" width="1" height="1"/>
<rect x="875" y="52" width="1" height="1"/>
<rect x="875" y="2" width="1" height="1"/>
<rect x="925" y="552" width="1" height="1"/>
<rect x="925" y="502" width="1" height="1"/>
<rect x="925" y="452" width="1" height="1"/>
<rect x="925" y="402" width="1" height="1"/>
<rect x="925" y="352" width="1" height="1"/>
<rect x="925" y="302" width="1" height="1"/>
<rect x="925" y="252" width="1" height="1"/>
<rect x="925" y="202" width="1" height="1"/>
<rect x="925" y="152" width="1" height="1"/>
<rect x="925" y="102" width="1" height="1"/>
<rect x="925" y="52" width="1" height="1"/>
<rect x="925" y="2" width="1" height="1"/>
<rect x="975" y="552" width="1" height="1"/>
<rect x="975" y="502" width="1" height="1"/>
<rect x="975" y="452" width="1" height="1"/>
<rect x="975" y="402" width="1" height="1"/>
<rect x="975" y="352" width="1" height="1"/>
<rect x="975" y="302" width="1" height="1"/>
<rect x="975" y="252" width="1" height="1"/>
<rect x="975" y="202" width="1" height="1"/>
<rect x="975" y="152" width="1" height="1"/>
<rect x="975" y="102" width="1" height="1"/>
<rect x="975" y="52" width="1" height="1"/>
<rect x="975" y="2" width="1" height="1"/>
<rect x="1025" y="552" width="1" height="1"/>
<rect x="1025" y="502" width="1" height="1"/>
<rect x="1025" y="452" width="1" height="1"/>
<rect x="1025" y="402" width="1" height="1"/>
<rect x="1025" y="352" width="1" height="1"/>
<rect x="1025" y="302" width="1" height="1"/>
<rect x="1025" y="252" width="1" height="1"/>
<rect x="1025" y="202" width="1" height="1"/>
<rect x="1025" y="152" width="1" height="1"/>
<rect x="1025" y="102" width="1" height="1"/>
<rect x="1025" y="52" width="1" height="1"/>
<rect x="1025" y="2" width="1" height="1"/>
</g>
<g stroke="#8a0000" stroke-width="1.2" fill="none"><line x1="5" y1="552.5" x2="45" y2="552.5"/><line x1="25.5" y1="532" x2="25.5" y2="572"/><circle cx="25.5" cy="552.5" r="4.8"/></g>

</svg>
<svg class="a" style="left:0;top:0" width="1500" height="844">
<g stroke="#7a7a7a" stroke-width="1">
<line x1="120.5" y1="148" x2="120.5" y2="155"/>
<line x1="170.5" y1="148" x2="170.5" y2="155"/>
<line x1="220.5" y1="148" x2="220.5" y2="155"/>
<line x1="270.5" y1="148" x2="270.5" y2="155"/>
<line x1="320.5" y1="148" x2="320.5" y2="155"/>
<line x1="370.5" y1="148" x2="370.5" y2="155"/>
<line x1="420.5" y1="148" x2="420.5" y2="155"/>
<line x1="470.5" y1="148" x2="470.5" y2="155"/>
<line x1="520.5" y1="148" x2="520.5" y2="155"/>
<line x1="570.5" y1="148" x2="570.5" y2="155"/>
<line x1="620.5" y1="148" x2="620.5" y2="155"/>
<line x1="670.5" y1="148" x2="670.5" y2="155"/>
<line x1="720.5" y1="148" x2="720.5" y2="155"/>
<line x1="770.5" y1="148" x2="770.5" y2="155"/>
<line x1="820.5" y1="148" x2="820.5" y2="155"/>
<line x1="870.5" y1="148" x2="870.5" y2="155"/>
<line x1="920.5" y1="148" x2="920.5" y2="155"/>
<line x1="970.5" y1="148" x2="970.5" y2="155"/>
<line x1="1020.5" y1="148" x2="1020.5" y2="155"/>
<line x1="1070.5" y1="148" x2="1070.5" y2="155"/>
<line x1="1120.5" y1="148" x2="1120.5" y2="155"/>
<line x1="88" y1="707.5" x2="95" y2="707.5"/>
<line x1="88" y1="657.5" x2="95" y2="657.5"/>
<line x1="88" y1="607.5" x2="95" y2="607.5"/>
<line x1="88" y1="557.5" x2="95" y2="557.5"/>
<line x1="88" y1="507.5" x2="95" y2="507.5"/>
<line x1="88" y1="457.5" x2="95" y2="457.5"/>
<line x1="88" y1="407.5" x2="95" y2="407.5"/>
<line x1="88" y1="357.5" x2="95" y2="357.5"/>
<line x1="88" y1="307.5" x2="95" y2="307.5"/>
<line x1="88" y1="257.5" x2="95" y2="257.5"/>
<line x1="88" y1="207.5" x2="95" y2="207.5"/>
<line x1="88" y1="157.5" x2="95" y2="157.5"/>
</g>
<defs><clipPath id="clipL"><rect x="71" y="155" width="24" height="593"/></clipPath></defs>
<g font-family="Liberation Sans" font-size="9.6" fill="#151515" text-anchor="middle">
<text x="120" y="141.2">0</text>
<text x="170" y="141.2">10</text>
<text x="220" y="141.2">20</text>
<text x="270" y="141.2">30</text>
<text x="320" y="141.2">40</text>
<text x="370" y="141.2">50</text>
<text x="420" y="141.2">60</text>
<text x="470" y="141.2">70</text>
<text x="520" y="141.2">80</text>
<text x="570" y="141.2">90</text>
<text x="620" y="141.2">100</text>
<text x="670" y="141.2">110</text>
<text x="720" y="141.2">120</text>
<text x="770" y="141.2">130</text>
<text x="820" y="141.2">140</text>
<text x="870" y="141.2">150</text>
<text x="920" y="141.2">160</text>
<text x="970" y="141.2">170</text>
<text x="1020" y="141.2">180</text>
<text x="1070" y="141.2">190</text>
<text x="1120" y="141.2">200</text>
<g clip-path="url(#clipL)" font-size="9">
<text transform="translate(81.4 707) rotate(-90)">0</text>
<text transform="translate(81.4 657) rotate(-90)">10</text>
<text transform="translate(81.4 607) rotate(-90)">20</text>
<text transform="translate(81.4 557) rotate(-90)">30</text>
<text transform="translate(81.4 507) rotate(-90)">40</text>
<text transform="translate(81.4 457) rotate(-90)">50</text>
<text transform="translate(81.4 407) rotate(-90)">60</text>
<text transform="translate(81.4 357) rotate(-90)">70</text>
<text transform="translate(81.4 307) rotate(-90)">80</text>
<text transform="translate(81.4 257) rotate(-90)">90</text>
<text transform="translate(81.4 207) rotate(-90)">100</text>
<text transform="translate(81.4 157) rotate(-90)">110</text>
</g></g>
<path d="M871,145 L883,145 L877,151 Z" fill="#111"/>
<path d="M84,561 L84,573 L90,567 Z" fill="#111"/>
</svg>
<div id="zoomlbl" class="a">10 &lt; 100</div>
<div id="hist" class="a"><i>Kommando:</i> layeradd</div>
<div id="cmdrow" class="a"></div>
<div id="cmdlbl" class="a">Kommando:</div>
<div id="cmdin" class="a"></div>
<div id="cmdbtn" class="a"></div>
<svg class="a" style="left:0;top:0" width="1500" height="844" pointer-events="none">
<defs>
 <radialGradient id="gRing" cx="877.2" cy="566.6" r="40" gradientUnits="userSpaceOnUse">
  <stop offset="0" stop-color="#000" stop-opacity="0"/>
  <stop offset=".76" stop-color="#000" stop-opacity="0"/>
  <stop offset=".82" stop-color="#182028"/>
  <stop offset=".86" stop-color="#34414e"/>
  <stop offset=".89" stop-color="#56687a"/>
  <stop offset=".915" stop-color="#4e5e6e"/>
  <stop offset=".94" stop-color="#64788a"/>
  <stop offset=".96" stop-color="#56697a"/>
  <stop offset=".978" stop-color="#6e8294"/>
  <stop offset=".99" stop-color="#5a6c7c"/>
  <stop offset="1" stop-color="#000" stop-opacity="0"/>
 </radialGradient>
</defs>
<rect x="1143" y="158" width="8" height="410" rx="4" fill="#000"/>
<circle cx="877.2" cy="566.6" r="40" fill="url(#gRing)"/>
<path d="M876.9,566.2 L876.9,589.9 L882.6,584.7 L886.9,595.1 L891.8,592.7 L887.8,583.2 L893.5,582.3 Z" fill="#fff" stroke="#fff" stroke-width=".6" stroke-linejoin="round"/>
<path d="M877.9,568.7 L877.9,587.5 L882.9,583 L887.3,593.7 L890.4,592.2 L886.3,582.4 L891,581.6 Z" fill="#fff" stroke="#000" stroke-width="1" stroke-linejoin="round"/>
<!-- title icon -->
<circle cx="102" cy="118.6" r="5.6" fill="#f4f4f4" stroke="#31488f" stroke-width="2"/>
<path d="M99.5,116 L103.5,120 M102,115.5 L102,121 M99,118.6 L105,118.6" stroke="#d08080" stroke-width=".5"/>
<path d="M102.6,119.2 L106,122.6" stroke="#e8a020" stroke-width="1.8" stroke-linecap="round"/>
<circle cx="106.4" cy="123" r="1" fill="#e06060"/>
<!-- cmd button icon -->
<rect x="1133.5" y="780.5" width="13" height="9" fill="#eee" stroke="#222" stroke-width="1"/>
<rect x="1133" y="780" width="14" height="3" fill="#000"/>
</svg>

<div id="rpanel" class="a"></div>
<div id="rtitle" class="a"></div>
<div id="rtitleT" class="a">Layerliste</div>
<div id="rbtns" class="a">
<div class="lbtn" style="left:1px;width:58px"></div>
<div class="lbtn" style="left:61px;width:58px"></div>
<div class="lbtn" style="left:121px;width:58px"></div>
<div class="lbtn" style="left:181px;width:58px"></div>
<div class="lbtn" style="left:241px;width:58px"></div>
</div>
<div class="row" style="top:157px"><div class="sw" style="background:#fff;border:1px solid #000"></div><span class="nm">0</span></div>
<div class="row" style="top:177px"><div class="sw"></div><span class="nm">Sichtbar</span></div>
<div class="row" style="top:197px"><div class="sw"></div><span class="nm">Unsichtbar</span></div>
<div class="row" style="top:217px;background:#0b47d6;color:#fff"><div class="sw" style="background:#e03a4a;border:1px solid #333"></div><span class="nm">Zentrum</span></div>
<svg class="a" style="left:0;top:0" width="1500" height="260">
<defs>
 <g id="eye"><path d="M-7.4,0.3 C-5.6,-3.4 -3,-5.2 0.2,-5.2 C3.8,-5.2 6.2,-3.2 7.5,0.3 C6.2,3.6 3.6,5.2 0.2,5.2 C-3.2,5.2 -5.8,3.6 -7.4,0.3 Z" fill="#000"/><path d="M-4.7,0.7 C-3.7,-1.4 -1.9,-2.7 0.3,-2.7 C2.5,-2.7 4.1,-1.4 4.9,0.7 C3.9,2.5 2.3,3.2 0.2,3.2 C-1.9,3.2 -3.7,2.5 -4.7,0.7 Z" fill="#fff"/><circle cx=".3" cy="-.2" r="2.3" fill="#000"/><circle cx="-.2" cy="-1" r=".6" fill="#fff"/></g>
 <g id="lock"><path d="M-3.2,0 L-3.2,-2.5 A3.2,3.4 0 0 1 3.2,-2.5 L3.2,0" fill="none" stroke-width="1.6"/><rect x="-5" y="-0.2" width="10" height="7.2"/></g>
</defs>
<!-- close / float -->
<circle cx="1164" cy="118" r="7" fill="#6a6a6a"/>
<path d="M1161.2,115.2 L1166.8,120.8 M1166.8,115.2 L1161.2,120.8" stroke="#fff" stroke-width="1.7" stroke-linecap="round"/>
<circle cx="1182" cy="118" r="7" fill="#6a6a6a"/>
<rect x="1179.8" y="114.8" width="5.6" height="4.4" fill="none" stroke="#fff" stroke-width="1"/>
<rect x="1178.2" y="117" width="5.6" height="4.4" fill="#6a6a6a" stroke="#fff" stroke-width="1"/>
<!-- buttons icons -->
<use href="#eye" transform="translate(1185 142.5) scale(1.05)"/>
<g opacity=".35"><use href="#eye" transform="translate(1245 142.5) scale(1.05)"/></g>
<path d="M1302.9,137 h4 v4 h4 v4 h-4 v4 h-4 v-4 h-4 v-4 h4 Z" fill="#ee0000" stroke="#900" stroke-width=".6"/>
<rect x="1359" y="141" width="12" height="3.8" fill="#ee0000" stroke="#900" stroke-width=".6"/>
<path d="M1418.3,149.3 L1430.8,137" stroke="#7a5a20" stroke-width="3.4" stroke-linecap="round"/>
<path d="M1419,148.6 L1430.5,137.3" stroke="#e8b040" stroke-width="2"/>
<path d="M1429.4,138.6 L1431.2,136.8" stroke="#e02020" stroke-width="2.6" stroke-linecap="round"/>
<path d="M1417.5,150 L1419.8,147.8" stroke="#e8d0a0" stroke-width="1.8"/>
<!-- rows -->
<use href="#eye" transform="translate(1423 166.6)"/>
<use href="#eye" transform="translate(1423 186.6)"/>
<use href="#eye" transform="translate(1423 206.6)"/>
<g transform="translate(1423 226.6)"><path d="M-7.2,0.2 C-5.5,-3.2 -3,-5 0.2,-5 C3.8,-5 6,-3 7.3,0.3 C6,3.4 3.6,5 0.2,5 C-3.2,5 -5.6,3.4 -7.2,0.2 Z" fill="#25335e"/><path d="M-5,0.6 C-3.8,-1.8 -2,-3.2 0.3,-3.2 C2.6,-3.2 4.3,-1.8 5.1,0.6 C4,2.6 2.4,3.5 0.2,3.5 C-2.1,3.5 -3.9,2.6 -5,0.6 Z" fill="#0b47d6"/><path d="M-2.5,-2.8 C-2.7,-0.4 -1.6,1.6 0.3,1.8 C2.1,1.7 2.9,-0.2 2.8,-2.8 Z" fill="#25335e"/></g>
<g fill="#b8b8b8" stroke="#b8b8b8"><use href="#lock" transform="translate(1445.2 166.4)"/><use href="#lock" transform="translate(1445.2 186.4)"/><use href="#lock" transform="translate(1445.2 206.4)"/></g>
<g fill="#b4bed6" stroke="#b4bed6"><use href="#lock" transform="translate(1445.2 226.4)"/></g>
<path d="M1395.5,232.3 L1406.5,221.8" stroke="#6a5a30" stroke-width="3" stroke-linecap="round"/>
<path d="M1396,231.8 L1406.3,222" stroke="#d8b060" stroke-width="1.8"/>
<path d="M1405.2,223 L1407,221.3" stroke="#e05050" stroke-width="2.4" stroke-linecap="round"/>
</svg>

<div id="rdock" class="a"></div>
<svg class="a" style="left:1455px;top:107px" width="45" height="400">
<defs>
 <g id="win"><rect x=".5" y=".5" width="27.4" height="27.2" fill="#fff" stroke="#444" stroke-width="1"/><rect x="0" y="0" width="28.4" height="4.6" fill="#000"/><rect x="1.6" y="1.1" width="3" height="3" fill="#fff"/></g>
</defs>
<g fill="#a0a0a0">
 <rect x="7" y="10" width="2" height="2"/><rect x="13" y="10" width="2" height="2"/><rect x="19" y="10" width="2" height="2"/><rect x="25" y="10" width="2" height="2"/><rect x="31" y="10" width="2" height="2"/>
</g>
<g stroke="#777" stroke-width="1" stroke-dasharray="1 2">
 <line x1="4" y1="154.5" x2="45" y2="154.5"/>
 <line x1="4" y1="302.5" x2="45" y2="302.5"/>
</g>
<rect x="1" y="13" width="42" height="42.5" rx="5" fill="#b4b4b4"/>
<rect x="1" y="310" width="42" height="43" rx="5" fill="#b4b4b4"/>
<!-- icon 1 : layers -->
<g transform="translate(7.6 20)"><use href="#win"/>
 <path d="M9,12 L16,9.6 L16,20.5 L9,23 Z" fill="#6a6a6a" stroke="#444" stroke-width=".6"/>
 <path d="M11,11.4 L18,9 L18,20 L11,22.4 Z" fill="#9a9a9a" stroke="#555" stroke-width=".6"/>
 <path d="M13,10.8 L21.5,8 L21.5,19.4 L13,22 Z" fill="#f6f6f6" stroke="#666" stroke-width=".7"/>
 <path d="M15.2,19.2 L19.8,11.2 L19.8,18 Z" fill="none" stroke="#ee3030" stroke-width=".8"/>
</g>
<!-- icon 2 : block -->
<g transform="translate(7.6 67)"><use href="#win"/>
 <rect x="7.4" y="11" width="10.6" height="7.6" fill="#f6ecc0" stroke="#777" stroke-width=".8"/>
 <circle cx="16.3" cy="18.8" r="4.4" fill="#f6ecc0" fill-opacity=".85" stroke="#777" stroke-width=".8"/>
</g>
<!-- icon 3 : rounded rect -->
<g transform="translate(7.6 113)"><use href="#win"/>
 <rect x="5.5" y="10" width="17" height="11.5" rx="2.5" fill="#f6f6f4" stroke="#b8c8e0" stroke-width=".9"/>
</g>
<!-- icon 4 : list -->
<g transform="translate(7.6 169)"><use href="#win"/>
 <rect x="3.4" y="8" width="3.6" height="3" fill="#111"/><rect x="3.4" y="13.4" width="3.6" height="3" fill="#111"/><rect x="3.4" y="18.8" width="3.6" height="3" fill="#111"/>
 <rect x="9.4" y="8.3" width="15" height="2.6" fill="none" stroke="#333" stroke-width=".8"/><rect x="9.4" y="13.7" width="15" height="2.6" fill="none" stroke="#333" stroke-width=".8"/><rect x="9.4" y="19.1" width="15" height="2.6" fill="none" stroke="#333" stroke-width=".8"/>
</g>
<!-- icon 5 : funnel -->
<g transform="translate(7.6 215)"><use href="#win"/>
 <path d="M6.5,10.6 C9,9.4 19,9.4 21.6,10.6 L16,17 L15.8,24.6 L12.6,22.6 L12.4,17 Z" fill="#b8b8b8" stroke="#777" stroke-width=".6"/>
 <ellipse cx="14" cy="10.6" rx="7.5" ry="1.4" fill="#6e6e6e"/>
</g>
<!-- icon 6 : screw / block attribute -->
<g transform="translate(7.6 261)"><use href="#win"/>
 <path d="M6,8.5 L11,13 L11,20.5 L6,25 Z" fill="#fff" stroke="#555" stroke-width=".8"/>
 <rect x="11" y="13" width="10.5" height="8" rx="1" fill="#a8a8a8" stroke="#666" stroke-width=".6"/>
 <line x1="3.5" y1="17" x2="25.5" y2="17" stroke="#ee8080" stroke-width=".8" stroke-dasharray="1.4 .9"/>
</g>
<!-- icon 7 : command -->
<g transform="translate(7.6 317)"><use href="#win"/>
 <path d="M3.5,8.4 h8 M3.5,11.3 h9 M3.5,14.2 h9.5 M3.5,17.1 h8.5" stroke="#888" stroke-width=".8"/>
 <line x1="0.5" y1="22.2" x2="28" y2="22.2" stroke="#555" stroke-width=".8"/>
 <path d="M3.5,25.2 h2 M8,25.2 h10" stroke="#444" stroke-width=".9"/>
</g>
<!-- icon 8 : clipboard -->
<g transform="translate(7.6 363)"><use href="#win"/>
 <rect x="8.4" y="9.6" width="11.4" height="14.6" rx="1" fill="#c8861e" stroke="#8a5a10" stroke-width=".6"/>
 <rect x="10" y="11.4" width="8.2" height="11" fill="#f6f6f6"/>
 <path d="M11,14 h6 M11,16 h6 M11,18 h5" stroke="#bbb" stroke-width=".6"/>
 <rect x="11.2" y="8.6" width="5.8" height="2.6" rx=".6" fill="#999" stroke="#666" stroke-width=".5"/>
 <path d="M16,22.4 L18.2,20.2 L18.2,22.4 Z" fill="#5a8ad8"/>
</g>
</svg>

<div id="status" class="a">
<div class="st" style="left:2px;top:9px">151.4,28</div>
<div class="st" style="left:2px;top:29px">@151.4,28</div>
<div class="a" style="left:253px;top:4px;width:1px;height:40px;background:#777"></div>
<div class="st" style="left:256px;top:9px">153.9674&lt;10°</div>
<div class="st" style="left:256px;top:29px">@153.9674&lt;10°</div>
<div class="a" style="left:506px;top:21px;width:6px;height:6px;border-radius:3px;background:#c4c4c4"></div>
<div class="st" style="left:548px;top:18px">Element oder Bereich selektieren</div>
<div class="a" style="left:941px;top:21px;width:6px;height:6px;border-radius:3px;background:#c4c4c4"></div>
<div class="st" style="left:949px;top:18px">Keine Objekte selektiert.</div>
<div class="a" style="left:1269px;top:21px;width:6px;height:6px;border-radius:3px;background:#c4c4c4"></div>
<svg class="a" style="left:700px;top:0" width="60" height="46">
<rect x="17.6" y="8.4" width="17" height="29" rx="8.5" fill="#fff" stroke="#555" stroke-width="1"/>
<path d="M17.4,21.8 Q26,19.6 34.8,21.8" fill="none" stroke="#444" stroke-width="1.6"/>
<line x1="26" y1="8.6" x2="26" y2="20.6" stroke="#444" stroke-width="1"/>
<rect x="24.3" y="10.8" width="3.4" height="6.8" rx="1.7" fill="#fff" stroke="#444" stroke-width="1"/>
</svg>

</div>
</body></html>
